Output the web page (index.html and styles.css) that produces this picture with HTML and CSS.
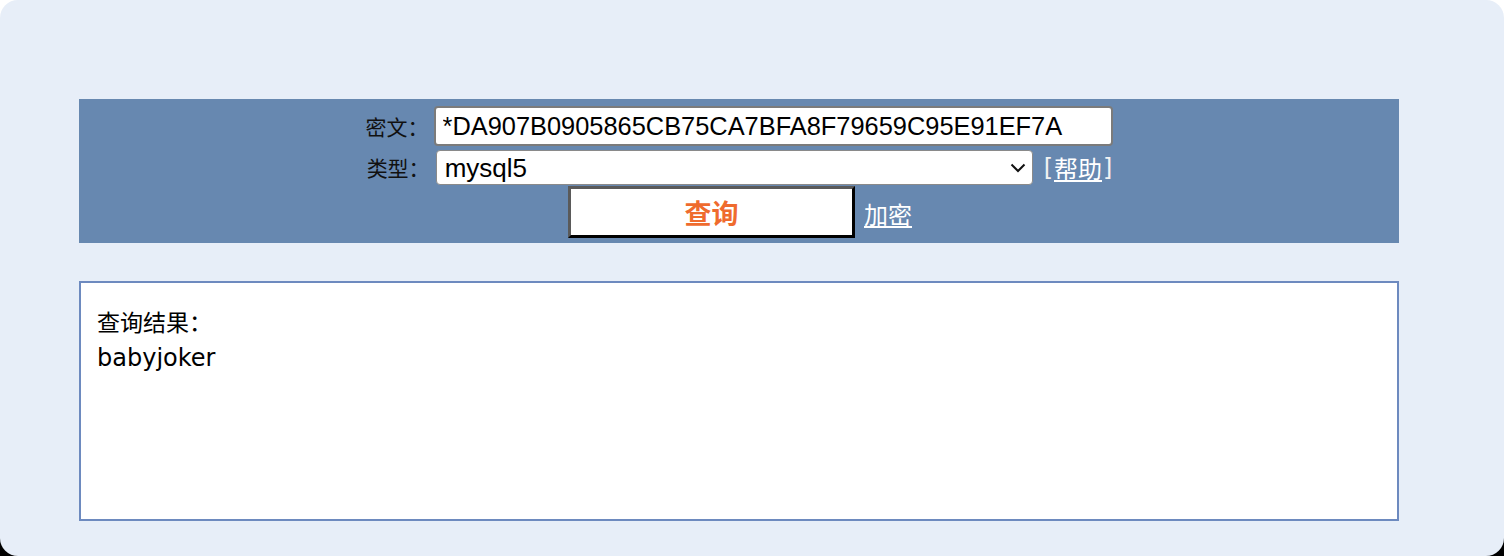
FILE: index.html
```html
<!DOCTYPE html>
<html lang="zh-CN">
<head>
<meta charset="utf-8">
<title>MD5 查询</title>
<link rel="stylesheet" href="styles.css">
</head>
<body>
<div class="page">
  <form class="panel">
    <div class="row row-cipher">
      <label class="label" for="cipher">密文：</label>
      <input class="cipher" id="cipher" type="text" value="*DA907B0905865CB75CA7BFA8F79659C95E91EF7A">
    </div>
    <div class="row row-type">
      <label class="label" for="type">类型：</label>
      <select class="type" id="type">
        <option>mysql5</option>
      </select>
      <span class="help">[<a class="link" href="#">帮助</a>]</span>
    </div>
    <div class="row row-submit">
      <button class="submit" type="button">查询</button>
      <a class="link encrypt" href="#">加密</a>
    </div>
  </form>
  <div class="result">
    <div class="result-title">查询结果：</div>
    <div class="result-value">babyjoker</div>
  </div>
</div>
</body>
</html>
```

FILE: styles.css
```css
html {
  margin: 0;
  height: 100%;
  background: linear-gradient(#ffffff 50%, #000000 50%);
}

body {
  margin: 0;
  width: 1504px;
  height: 556px;
  background: #e7eef8;
  border-radius: 18px;
  overflow: hidden;
  font-family: "Noto Sans CJK SC", "DejaVu Sans", sans-serif;
}

.page {
  padding: 99px 0 0 79px;
  display: flex;
  flex-direction: column;
  gap: 38px;
}

.panel {
  width: 1320px;
  height: 144px;
  box-sizing: border-box;
  margin: 0;
  padding: 7px 0 5px;
  background: #6788b0;
  display: flex;
  flex-direction: column;
}

.row {
  display: flex;
  justify-content: center;
  align-items: center;
}

.row-cipher {
  height: 40px;
  margin-bottom: 4px;
}

.row-type {
  height: 35px;
  margin-bottom: 1px;
}

.row-submit {
  height: 52px;
  padding-left: 2px;
}

.label {
  font-family: "Noto Sans CJK SC", sans-serif;
  font-size: 21px;
  color: #111;
  line-height: 1;
  margin-right: 5px;
}

.row-type .label {
  margin-right: 6px;
  margin-left: 1px;
}

.cipher {
  width: 679px;
  height: 40px;
  box-sizing: border-box;
  border: 2px solid #7b7b7b;
  border-radius: 4px;
  background: #fff;
  padding: 0 4px 0 7px;
  font-family: "Liberation Sans", Arial, sans-serif;
  font-size: 25.4px;
  color: #000;
}

.type {
  -webkit-appearance: none;
  appearance: none;
  width: 597px;
  height: 35px;
  box-sizing: border-box;
  border: 1px solid #8a8a8a;
  border-radius: 4px;
  background-color: #fff;
  background-image: url("data:image/svg+xml,%3Csvg xmlns='http://www.w3.org/2000/svg' width='16' height='10' viewBox='0 0 16 10'%3E%3Cpath d='M1.5 1.5 L8 8 L14.5 1.5' fill='none' stroke='%23111' stroke-width='2'/%3E%3C/svg%3E");
  background-repeat: no-repeat;
  background-position: right 6px center;
  background-size: 16px 10px;
  padding: 0 4px 0 8px;
  font-family: "Liberation Sans", Arial, sans-serif;
  font-size: 26px;
  color: #000;
}

.link {
  color: #ffffff;
  text-decoration: underline;
  font-family: "Noto Sans CJK SC", sans-serif;
  font-size: 24px;
  line-height: 1;
}

.help {
  margin-left: 11px;
  color: #f2f2f2;
  font-family: "DejaVu Sans", sans-serif;
  font-size: 24px;
  line-height: 1;
  display: flex;
  align-items: center;
  gap: 1px;
}

.submit {
  width: 287px;
  height: 52px;
  box-sizing: border-box;
  border-style: solid;
  border-width: 3px;
  border-color: #5a5a5a #000 #000 #5a5a5a;
  background: #fff;
  padding: 0;
  font-family: "Noto Sans CJK SC", sans-serif;
  font-size: 27px;
  font-weight: bold;
  color: #ef6b2e;
  line-height: 1;
}

.encrypt {
  margin-left: 9px;
  margin-top: 4px;
}

.result {
  width: 1320px;
  height: 240px;
  box-sizing: border-box;
  border: 2px solid #6d8abf;
  background: #fff;
  padding: 20px 16px;
  font-size: 24px;
  line-height: 37px;
  color: #000;
}

.result-title {
  font-family: "Noto Sans CJK SC", sans-serif;
  font-size: 23px;
}

.result-value {
  font-family: "DejaVu Sans", sans-serif;
  font-size: 24px;
}
```
